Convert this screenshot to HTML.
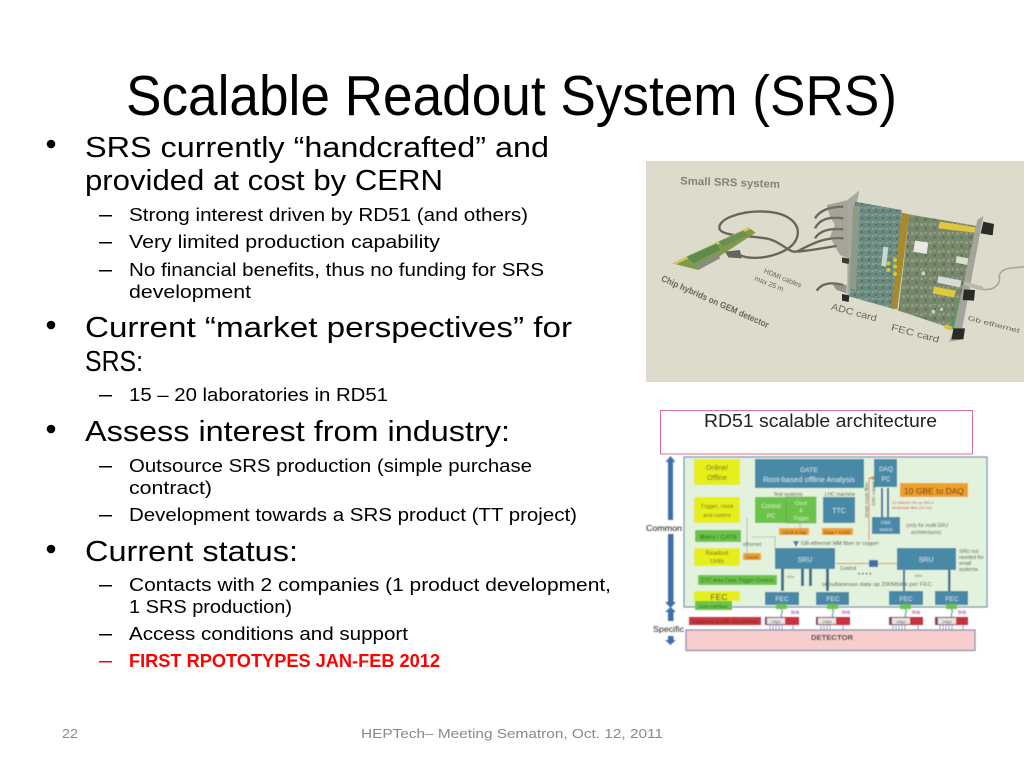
<!DOCTYPE html>
<html>
<head>
<meta charset="utf-8">
<style>
html,body{margin:0;padding:0;background:#fff;width:1024px;height:768px;overflow:hidden}
svg{display:block;position:absolute;left:0;top:0}
text{font-family:"Liberation Sans",sans-serif}
.a{font-size:28.5px;fill:#000}
.b{font-size:18.2px;fill:#000}
.f{font-size:13.2px;fill:#898989}
</style>
</head>
<body>
<svg width="1024" height="768" viewBox="0 0 1024 768" xmlns="http://www.w3.org/2000/svg">
<defs>
<filter id="bl" x="-5%" y="-5%" width="110%" height="110%"><feGaussianBlur stdDeviation="0.45"/></filter>
<filter id="bl2" x="-5%" y="-5%" width="110%" height="110%"><feGaussianBlur stdDeviation="0.8"/></filter>
<pattern id="pcb1" width="21" height="21" patternUnits="userSpaceOnUse"><rect width="21" height="21" fill="#6a8a80"/><rect x="2" y="3" width="8" height="6" fill="#86a096"/><rect x="12" y="12" width="6" height="6" fill="#557268"/><rect x="13" y="2" width="4" height="4" fill="#93a596"/></pattern>
<pattern id="pcb2" width="27" height="27" patternUnits="userSpaceOnUse"><rect width="27" height="27" fill="#77876c"/><rect x="3" y="4" width="9" height="8" fill="#909c80"/><rect x="16" y="15" width="8" height="8" fill="#62735a"/><rect x="17" y="3" width="5" height="5" fill="#a0a890"/></pattern>
</defs>

<!-- Title -->
<text x="126" y="115" font-size="57" fill="#000" textLength="771" lengthAdjust="spacingAndGlyphs">Scalable Readout System (SRS)</text>

<!-- Bullets -->
<g fill="#000">
<circle cx="51" cy="144" r="4.3"/><circle cx="51" cy="325" r="4.3"/><circle cx="51" cy="429" r="4.3"/><circle cx="51" cy="549" r="4.3"/>
<rect x="99" y="215" width="13" height="1.5"/><rect x="99" y="242" width="13" height="1.5"/><rect x="99" y="270" width="13" height="1.5"/>
<rect x="99" y="395" width="13" height="1.5"/><rect x="99" y="466" width="13" height="1.5"/><rect x="99" y="515" width="13" height="1.5"/>
<rect x="99" y="585" width="13" height="1.5"/><rect x="99" y="634" width="13" height="1.5"/>
</g>
<rect x="99" y="661" width="13" height="1.5" fill="#f00"/>

<!-- Body text -->
<text class="a" x="85" y="157" textLength="464" lengthAdjust="spacingAndGlyphs">SRS currently “handcrafted” and</text>
<text class="a" x="85" y="190" textLength="358" lengthAdjust="spacingAndGlyphs">provided at cost by CERN</text>
<text class="b" x="129" y="221" textLength="399" lengthAdjust="spacingAndGlyphs">Strong interest driven by RD51 (and others)</text>
<text class="b" x="129" y="248" textLength="311" lengthAdjust="spacingAndGlyphs">Very limited production capability</text>
<text class="b" x="129" y="276" textLength="415" lengthAdjust="spacingAndGlyphs">No financial benefits, thus no funding for SRS</text>
<text class="b" x="129" y="298" textLength="122" lengthAdjust="spacingAndGlyphs">development</text>
<text class="a" x="85" y="337" textLength="487" lengthAdjust="spacingAndGlyphs">Current “market perspectives” for</text>
<text class="a" x="85" y="371" textLength="58" lengthAdjust="spacingAndGlyphs">SRS:</text>
<text class="b" x="129" y="401" textLength="259" lengthAdjust="spacingAndGlyphs">15 – 20 laboratories in RD51</text>
<text class="a" x="85" y="441" textLength="425" lengthAdjust="spacingAndGlyphs">Assess interest from industry:</text>
<text class="b" x="129" y="472" textLength="403" lengthAdjust="spacingAndGlyphs">Outsource SRS production (simple purchase</text>
<text class="b" x="129" y="494" textLength="83" lengthAdjust="spacingAndGlyphs">contract)</text>
<text class="b" x="129" y="521" textLength="448" lengthAdjust="spacingAndGlyphs">Development towards a SRS product (TT project)</text>
<text class="a" x="85" y="561" textLength="213" lengthAdjust="spacingAndGlyphs">Current status:</text>
<text class="b" x="129" y="591" textLength="482" lengthAdjust="spacingAndGlyphs">Contacts with 2 companies (1 product development,</text>
<text class="b" x="129" y="613" textLength="163" lengthAdjust="spacingAndGlyphs">1 SRS production)</text>
<text class="b" x="129" y="640" textLength="279" lengthAdjust="spacingAndGlyphs">Access conditions and support</text>
<text class="b" x="129" y="667" font-weight="bold" style="fill:#f00" textLength="311" lengthAdjust="spacingAndGlyphs">FIRST RPOTOTYPES JAN-FEB 2012</text>

<!-- Footer -->
<text class="f" x="62" y="738" textLength="16" lengthAdjust="spacingAndGlyphs">22</text>
<text class="f" x="361" y="738" textLength="302" lengthAdjust="spacingAndGlyphs">HEPTech– Meeting Sematron, Oct. 12, 2011</text>

<!-- Image 1: small SRS system (coordinates in 3x zoom space) -->
<rect x="646" y="161" width="378" height="221" fill="#dcdbcc"/>
<g transform="translate(640,150) scale(.33333)" filter="url(#bl2)">
<text x="120" y="103" font-size="33" font-weight="bold" style="fill:#83837a" transform="rotate(2 120 103)" textLength="300" lengthAdjust="spacingAndGlyphs">Small SRS system</text>
<text x="62" y="392" font-size="27" font-weight="bold" style="fill:#66665e" transform="rotate(24 62 392)" textLength="350" lengthAdjust="spacingAndGlyphs">Chip hybrids on GEM detector</text>
<text x="370" y="368" font-size="21" style="fill:#66665e" transform="rotate(22 370 368)">HDMI cables</text>
<text x="342" y="390" font-size="21" style="fill:#66665e" transform="rotate(22 342 390)">max 25 m</text>
<text x="572" y="478" font-size="28" style="fill:#66665e" transform="rotate(15 572 478)" textLength="140" lengthAdjust="spacingAndGlyphs">ADC card</text>
<text x="752" y="540" font-size="28" style="fill:#66665e" transform="rotate(15 752 540)" textLength="148" lengthAdjust="spacingAndGlyphs">FEC card</text>
<text x="982" y="510" font-size="20" style="fill:#66665e" transform="rotate(14 982 510)" textLength="160" lengthAdjust="spacingAndGlyphs">Gb ethernet</text>
<!-- cables -->
<g fill="none" stroke="#66665c" stroke-width="7">
<path d="M240 240C225 210 300 180 380 185C450 190 485 225 470 265C455 305 380 330 320 322L280 310"/>
<path d="M240 240C260 262 340 255 390 268C420 276 440 300 460 305C500 305 540 295 590 288"/>
<path d="M525 205C540 180 570 170 610 170"/>
<path d="M525 235C540 205 570 200 610 205"/>
<path d="M525 265C540 240 570 235 610 238"/>
<path d="M470 305C510 285 550 260 610 265"/>
<path d="M530 422C545 400 570 395 610 405"/>
</g>
<path d="M560 165L625 150L625 325L600 315L585 290L570 260L585 225L570 200Z" fill="#77776f" opacity=".55"/>
<path d="M575 400L620 405L620 430L590 420Z" fill="#77776f" opacity=".7"/>
<path d="M975 400C1020 425 1060 425 1075 400C1085 385 1070 380 1085 365C1100 350 1130 355 1152 350" fill="none" stroke="#a8a89c" stroke-width="5"/>
<!-- hybrid board -->
<polygon points="97,340 325,232 347,248 175,360" fill="#7f9a48"/>
<polygon points="97,340 325,232 330,238 108,343" fill="#d2c95a"/>
<polygon points="140,320 230,280 240,300 160,340" fill="#5f8a4f"/>
<polygon points="235,275 310,242 322,255 250,290" fill="#6a9055"/>
<polygon points="165,345 235,312 240,325 175,360" fill="#8b8b80"/>
<polygon points="255,305 300,300 305,325 265,322" fill="#66665e"/>
<!-- panel -->
<polygon points="622,150 658,122 650,160 632,440 622,445" fill="#a8a89e"/>
<!-- ADC -->
<polygon points="645,155 785,180 765,478 630,440" fill="url(#pcb1)"/>
<polygon points="640,165 660,170 648,420 628,415" fill="#8c9a8a"/>
<!-- gold connector -->
<polygon points="785,188 808,193 772,478 755,472" fill="#a78a2d"/>
<polygon points="730,290 745,292 738,350 724,348" fill="#c8d8d0"/>
<g fill="#d8c820"><circle cx="745" cy="340" r="6"/><circle cx="765" cy="330" r="6"/><circle cx="745" cy="360" r="6"/><circle cx="765" cy="350" r="6"/><circle cx="765" cy="372" r="6"/></g>
<!-- FEC -->
<polygon points="808,193 1012,228 950,540 775,482" fill="url(#pcb2)"/>
<polygon points="900,215 1008,232 1003,248 895,235" fill="#e2c63a"/>
<polygon points="825,272 865,278 860,312 820,305" fill="#e8e8e4"/>
<polygon points="895,378 965,392 960,412 892,398" fill="#d8dcd8"/>
<polygon points="882,410 948,422 942,442 878,430" fill="#e0c93a"/>
<polygon points="950,318 985,325 982,345 947,338" fill="#dcdcd0"/>
<circle cx="850" cy="370" r="6" fill="#c8d0c0"/><circle cx="880" cy="485" r="6" fill="#c0ccc0"/><circle cx="905" cy="478" r="5" fill="#c0ccc0"/>
<polygon points="958,440 972,443 945,540 930,535" fill="#4f9a62"/>
<polygon points="915,522 938,530 934,542 912,534" fill="#d8c030"/>
<polygon points="1012,210 1030,198 960,570 928,575 940,540" fill="#a4a49a"/>
<polygon points="1030,215 1062,222 1058,256 1022,250" fill="#2c2c28"/>
<polygon points="972,418 1005,420 1002,452 968,450" fill="#2c2c28"/>
<polygon points="940,535 975,535 970,568 935,568" fill="#2c2c28"/>
<polygon points="606,432 628,436 626,456 606,452" fill="#2c2c28"/>
<polygon points="606,322 628,326 626,342 606,338" fill="#3a3a34"/>
<polygon points="975,395 1030,410 1028,420 972,405" fill="#b8b8ac"/>
</g>

<!-- Image 2: RD51 diagram -->
<rect x="660.5" y="410.5" width="312" height="43.5" fill="#fff" stroke="#e0708a" stroke-width="1"/>
<text x="704" y="427" font-size="18" style="fill:#222" textLength="233" lengthAdjust="spacingAndGlyphs">RD51  scalable architecture</text>
<g filter="url(#bl)">
<!-- panel -->
<rect x="684" y="457" width="303" height="150" fill="#e3f2dc" stroke="#6f8fa8" stroke-width="1.2"/>
<!-- left arrows -->
<rect x="668" y="462" width="5" height="58" fill="#3d6fa8"/>
<polygon points="665.5,462 675.5,462 670.5,456" fill="#3d6fa8"/>
<text x="646" y="531" font-size="8.6" style="fill:#111" textLength="36" lengthAdjust="spacingAndGlyphs">Common</text>
<rect x="668" y="534" width="5.5" height="70" fill="#3d6fa8"/>
<polygon points="665,602 676,602 670.5,608" fill="#3d6fa8"/>
<polygon points="665,612 676,612 670.5,607" fill="#3d6fa8"/>
<rect x="668" y="611" width="5.5" height="10" fill="#3d6fa8"/>
<text x="653" y="632" font-size="8.6" style="fill:#222" textLength="31" lengthAdjust="spacingAndGlyphs">Specific</text>
<rect x="668" y="636" width="5.5" height="5" fill="#3d6fa8"/>
<polygon points="665,640 676,640 670.5,645" fill="#3d6fa8"/>

<!-- left column -->
<rect x="694" y="459" width="46" height="26" fill="#e6ee1e"/>
<text x="717" y="470" font-size="7" text-anchor="middle" style="fill:#6a6a20">Online/</text>
<text x="717" y="480" font-size="7" text-anchor="middle" style="fill:#6a6a20">Offline</text>
<rect x="694" y="497" width="46" height="26" fill="#e6ee1e"/>
<text x="717" y="508" font-size="5.6" text-anchor="middle" style="fill:#6a6a20">Trigger, clock</text>
<text x="717" y="517" font-size="5.6" text-anchor="middle" style="fill:#6a6a20">and control</text>
<rect x="695" y="530" width="46" height="12" fill="#6cc34a"/>
<text x="718" y="539" font-size="6.4" text-anchor="middle" style="fill:#2f5a2a">fibers / CAT6</text>
<rect x="694" y="548" width="46" height="18" fill="#e6ee1e"/>
<text x="717" y="555" font-size="6" text-anchor="middle" style="fill:#6a6a20">Readout</text>
<text x="717" y="563" font-size="6" text-anchor="middle" style="fill:#6a6a20">Units</text>
<rect x="698" y="575" width="79" height="10" fill="#6cc34a"/>
<text x="737" y="582" font-size="5.4" text-anchor="middle" style="fill:#2f5a2a" textLength="72" lengthAdjust="spacingAndGlyphs">DTC links Data Trigger Control</text>
<rect x="694" y="591" width="46" height="10" fill="#e6ee1e"/>
<text x="719" y="600" font-size="8.5" text-anchor="middle" style="fill:#333">FEC</text>
<rect x="695" y="601" width="37" height="9" fill="#6cc34a"/>
<text x="713" y="608" font-size="4.6" text-anchor="middle" style="fill:#2f5a2a">Links interface</text>
<rect x="689" y="617" width="72" height="8" fill="#c8383f"/>
<text x="725" y="623" font-size="4.6" text-anchor="middle" style="fill:#6e2020" textLength="66" lengthAdjust="spacingAndGlyphs">Equipment specific chip primitive</text>

<!-- top row -->
<rect x="755" y="459" width="109" height="29" fill="#4a89a8"/>
<text x="809" y="472" font-size="6.8" text-anchor="middle" style="fill:#cfe2ea">DATE</text>
<text x="809" y="482" font-size="7" text-anchor="middle" style="fill:#cfe2ea" textLength="92" lengthAdjust="spacingAndGlyphs">Root-based offline Analysis</text>
<text x="788" y="496" font-size="5" text-anchor="middle" style="fill:#444">Test systems</text>
<text x="840" y="496" font-size="5" text-anchor="middle" style="fill:#444">LHC machine</text>
<rect x="755" y="497" width="31" height="26" fill="#6cc34a"/>
<rect x="786" y="497" width="30" height="26" fill="#6cc34a" stroke="#4f8a52" stroke-width=".4"/>
<text x="771" y="508" font-size="6" text-anchor="middle" style="fill:#d8efc8">Control</text>
<text x="771" y="518" font-size="6" text-anchor="middle" style="fill:#d8efc8">PC</text>
<text x="801" y="505" font-size="5" text-anchor="middle" style="fill:#d8efc8">Clock</text>
<text x="801" y="512" font-size="5" text-anchor="middle" style="fill:#d8efc8">&amp;</text>
<text x="801" y="520" font-size="5" text-anchor="middle" style="fill:#d8efc8">Trigger</text>
<rect x="823" y="497" width="32" height="26" fill="#4a89a8"/>
<text x="839" y="513" font-size="7" text-anchor="middle" style="fill:#cfe2ea">TTC</text>
<rect x="874" y="459" width="23" height="28" fill="#4a89a8"/>
<text x="886" y="471" font-size="6.4" text-anchor="middle" style="fill:#cfe2ea">DAQ</text>
<text x="886" y="481" font-size="6.4" text-anchor="middle" style="fill:#cfe2ea">PC</text>
<rect x="900" y="483" width="68" height="14" fill="#ef9f2c"/>
<text x="904" y="494" font-size="8" style="fill:#443318" textLength="60" lengthAdjust="spacingAndGlyphs">10 GBE to DAQ</text>
<text x="892" y="504" font-size="3.8" style="fill:#d04a3a">10 GBASE-SR up 300 m</text>
<text x="892" y="509" font-size="3.8" style="fill:#d04a3a">Multimode fiber (10 Gb)</text>
<rect x="881" y="488" width="2" height="30" fill="#3d6f98"/><rect x="887" y="488" width="2" height="30" fill="#3d6f98"/>
<rect x="872" y="517" width="28" height="17" fill="#4a89a8"/>
<text x="886" y="524" font-size="4.8" text-anchor="middle" style="fill:#cfe2ea">GBE</text>
<text x="886" y="531" font-size="4.8" text-anchor="middle" style="fill:#cfe2ea">switch</text>
<text x="906" y="527" font-size="5" style="fill:#555">(only for multi-SRU</text>
<text x="911" y="534" font-size="5" style="fill:#555">architectures)</text>
<text transform="translate(868,518) rotate(-90)" font-size="4.6" style="fill:#555">Single mode fiber</text>
<text transform="translate(875,506) rotate(-90)" font-size="4.6" style="fill:#555">GBE copper</text>
<rect x="868.5" y="478" width="1" height="62" fill="#d98a50"/>
<polygon points="868,478 874,476 874,480" fill="#d98a50"/>

<!-- middle -->
<rect x="779" y="528" width="30" height="7" fill="#ef9f2c"/>
<text x="794" y="534" font-size="4.6" text-anchor="middle" style="fill:#5a3a10">Clock &amp; trig</text>
<rect x="822" y="528" width="31" height="7" fill="#ef9f2c"/>
<text x="837" y="534" font-size="4.6" text-anchor="middle" style="fill:#5a3a10">Data + Contr</text>
<text x="743" y="546" font-size="5" style="fill:#555">ethernet</text>
<rect x="743" y="553" width="18" height="7" fill="#ef9f2c"/>
<text x="752" y="559" font-size="4.6" text-anchor="middle" style="fill:#5a3a10">Contrl</text>
<text x="801" y="545" font-size="5.6" style="fill:#444" textLength="78" lengthAdjust="spacingAndGlyphs">GB-ethernet MM fiber or copper</text>
<polygon points="793,541 799,541 796,547" fill="#3d7f98"/>
<rect x="775" y="548" width="60" height="21" fill="#4a89a8"/>
<text x="805" y="562" font-size="7" text-anchor="middle" style="fill:#cfe2ea">SRU</text>
<rect x="897" y="548" width="59" height="22" fill="#4a89a8"/>
<text x="926" y="562" font-size="7" text-anchor="middle" style="fill:#cfe2ea">SRU</text>
<text x="959" y="553" font-size="5.2" style="fill:#444">SRU not</text>
<text x="959" y="559" font-size="5.2" style="fill:#444">needed for</text>
<text x="959" y="565" font-size="5.2" style="fill:#444">small</text>
<text x="959" y="571" font-size="5.2" style="fill:#444">systems</text>
<rect x="869" y="560" width="9" height="7" fill="#3a6fa8"/>
<rect x="836" y="563" width="33" height="1" fill="#d98a50"/><rect x="878" y="563" width="19" height="1" fill="#d98a50"/>
<text x="840" y="570" font-size="5" style="fill:#444">Control</text>
<text x="858" y="576" font-size="6" style="fill:#222">• • • •</text>
<text x="822" y="586" font-size="5.6" style="fill:#444" textLength="110" lengthAdjust="spacingAndGlyphs">simultaneous data  up 200Mbit/s per FEC</text>
<text x="787" y="578" font-size="4" style="fill:#555">4Gv</text>
<text x="915" y="577" font-size="4" style="fill:#555">4Gv</text>
<g fill="#3d6f88">
<rect x="781" y="569" width="3" height="22"/><rect x="801" y="569" width="3" height="17"/><rect x="809" y="569" width="3" height="17"/><rect x="826" y="569" width="3" height="22"/>
<rect x="903" y="570" width="2" height="21"/><rect x="948" y="570" width="2.5" height="21"/>
</g>
<path d="M747 518V560M800 523V530M752 537H775V550" fill="none" stroke="#8aa0a0" stroke-width=".6"/>

<!-- FEC row -->
<g fill="#4a89a8">
<rect x="765" y="592" width="34" height="13"/><rect x="816" y="592" width="33" height="13"/><rect x="889" y="591" width="34" height="14"/><rect x="935" y="591" width="33" height="14"/>
</g>
<g font-size="6.6" text-anchor="middle" style="fill:#cfe2ea">
<text x="782" y="601">FEC</text><text x="833" y="601">FEC</text><text x="906" y="601">FEC</text><text x="952" y="601">FEC</text>
</g>
<g fill="#6cc34a">
<rect x="776" y="604" width="11" height="5"/><rect x="827" y="604" width="11" height="5"/><rect x="900" y="604" width="11" height="5"/><rect x="946" y="604" width="11" height="5"/>
</g>
<g font-size="5.6" style="fill:#8a3a9a">
<text x="791" y="614">link</text><text x="842" y="614">link</text><text x="912" y="614">link</text><text x="958" y="614">link</text>
</g>
<path d="M781 609C785 612 779 614 782 617M832 609C836 612 830 614 833 617M905 609C909 612 903 614 906 617M951 609C955 612 949 614 952 617" fill="none" stroke="#4a89a8" stroke-width="1"/>
<g>
<rect x="765" y="617" width="34" height="8" fill="#7a4a6a"/><rect x="767" y="618" width="18" height="6" fill="#e8e4e0"/><rect x="785" y="617" width="14" height="8" fill="#c83040"/>
<rect x="816" y="617" width="34" height="8" fill="#7a4a6a"/><rect x="818" y="618" width="18" height="6" fill="#e8e4e0"/><rect x="836" y="617" width="14" height="8" fill="#c83040"/>
<rect x="889" y="617" width="34" height="8" fill="#7a4a6a"/><rect x="892" y="618" width="18" height="6" fill="#e8e4e0"/><rect x="910" y="617" width="13" height="8" fill="#c83040"/>
<rect x="935" y="617" width="33" height="8" fill="#7a4a6a"/><rect x="938" y="618" width="18" height="6" fill="#e8e4e0"/><rect x="956" y="617" width="12" height="8" fill="#c83040"/>
</g>
<g font-size="4" text-anchor="middle" style="fill:#444">
<text x="776" y="623">chips</text><text x="827" y="623">chips</text><text x="901" y="623">chips</text><text x="947" y="623">chips</text>
</g>
<path d="M770 625V631M773 625V631M776 625V631M779 625V631M782 625V631M793 625V631M821 625V631M824 625V631M827 625V631M830 625V631M843 625V631M893 625V631M896 625V631M899 625V631M902 625V631M905 625V631M918 625V631M940 625V631M943 625V631M946 625V631M949 625V631M952 625V631M963 625V631" stroke="#6f8fb8" stroke-width=".8"/>
<!-- detector -->
<rect x="686" y="630" width="289" height="20.5" fill="#f7cdcd" stroke="#7f8ca6" stroke-width="1.2"/>
<text x="811" y="640" font-size="7" font-weight="bold" style="fill:#222" textLength="42" lengthAdjust="spacingAndGlyphs">DETECTOR</text>
</g>
</svg>
</body>
</html>
